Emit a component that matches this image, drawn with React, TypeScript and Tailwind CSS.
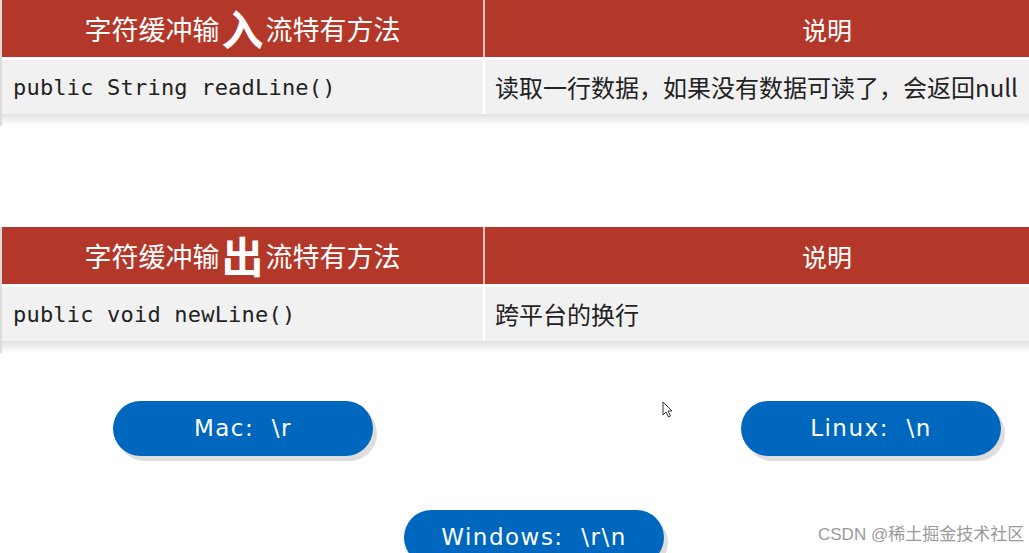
const cjk = "font-['Noto_Sans_CJK_SC',sans-serif]"

function MethodTable({ before, big, after, code, desc }: { before: string; big: string; after: string; code: string; desc: string }) {
  return (
    <div className="border-l-2 border-[#dcdcdc]">
      <div className="flex h-[57px] bg-[#b3382a] text-white">
        <div className={`w-[481px] flex items-center justify-center ${cjk} text-[27px] leading-none`}>
          <span>{before}</span>
          <span className="text-[42px] font-bold -mt-[2px] mx-[2px]">{big}</span>
          <span>{after}</span>
        </div>
        <div className="w-[2px] bg-[#e8c0bb]" />
        <div className={`flex-1 flex items-center justify-center pt-[2px] ${cjk} text-[25px] pl-[140px]`}>说明</div>
      </div>
      <div className="h-[3px] bg-white" />
      <div className="flex h-[54px] bg-[#f1f1f1] text-[#222]">
        <div className="w-[481px] flex items-center pl-[11px] font-['DejaVu_Sans_Mono',monospace] text-[22px] tracking-[0.2px]">{code}</div>
        <div className="w-[2px] bg-white" />
        <div className={`flex-1 flex items-center pl-[10px] ${cjk} text-[24px] whitespace-nowrap overflow-hidden`}>{desc}</div>
      </div>
      <div className="h-[12px] bg-linear-to-b from-[#e2e2e2] to-white" />
    </div>
  )
}

function Pill({ label }: { label: string }) {
  return (
    <div className="relative w-[260px] h-[55px]">
      <div className="absolute left-[4px] top-[5px] w-[260px] h-[55px] rounded-full bg-[#dedede]" />
      <div className="relative w-[260px] h-[55px] rounded-full bg-[#0067bf] text-white flex items-center justify-center font-['DejaVu_Sans',sans-serif] text-[23px] tracking-[1.5px] whitespace-pre">
        {label}
      </div>
    </div>
  )
}

export default function App() {
  return (
    <div className="relative w-[1029px] h-[553px] overflow-hidden bg-white">
      <MethodTable
        before="字符缓冲输"
        big="入"
        after="流特有方法"
        code="public String readLine()"
        desc="读取一行数据，如果没有数据可读了，会返回null"
      />
      <div className="h-[101px]" />
      <MethodTable
        before="字符缓冲输"
        big="出"
        after="流特有方法"
        code="public void newLine()"
        desc="跨平台的换行"
      />
      <div className="flex pl-[113px] pt-[48px] gap-[368px]">
        <Pill label="Mac:  \r" />
        <Pill label="Linux:  \n" />
      </div>
      <div className="pl-[404px] pt-[54px]">
        <Pill label="Windows:  \r\n" />
      </div>
      <svg className="absolute left-[662px] top-[401px]" width="12" height="18" viewBox="0 0 12 18">
        <path d="M1 1 L1 14 L4 11 L6.5 16 L8.5 15 L6 10 L10 10 Z" fill="white" stroke="#333" strokeWidth="1" strokeLinejoin="round" />
      </svg>
      <div className={`absolute left-[818px] top-[522px] text-[#9a9a9a] text-[17px] font-['Liberation_Sans','Noto_Sans_CJK_SC',sans-serif] whitespace-nowrap`}>
        CSDN @稀土掘金技术社区
      </div>
    </div>
  )
}
